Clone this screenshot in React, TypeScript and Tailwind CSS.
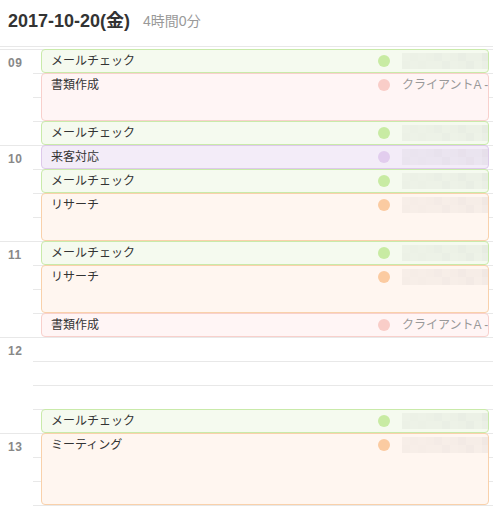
type Color = 'green' | 'pink' | 'purple' | 'orange';

interface CalEvent {
  title: string;
  start: number; // slot index from 09:00, 15 min each
  slots: number;
  color: Color;
  client?: string;
}

const SLOT = 24;

const palette: Record<Color, { box: string; dot: string }> = {
  green: { box: 'bg-[#f5faef] border-[#c9eaaa]', dot: 'bg-[#c8eba3]' },
  pink: { box: 'bg-[#fff5f5] border-[#f8d0cc]', dot: 'bg-[#f9cdc8]' },
  purple: { box: 'bg-[#f3ecf8] border-[#ddc9ea]', dot: 'bg-[#e2cdee]' },
  orange: { box: 'bg-[#fff6f0] border-[#f9d1ab]', dot: 'bg-[#fbcba1]' },
};

const events: CalEvent[] = [
  { title: 'メールチェック', start: 0, slots: 1, color: 'green' },
  { title: '書類作成', start: 1, slots: 2, color: 'pink', client: 'クライアントA -' },
  { title: 'メールチェック', start: 3, slots: 1, color: 'green' },
  { title: '来客対応', start: 4, slots: 1, color: 'purple' },
  { title: 'メールチェック', start: 5, slots: 1, color: 'green' },
  { title: 'リサーチ', start: 6, slots: 2, color: 'orange' },
  { title: 'メールチェック', start: 8, slots: 1, color: 'green' },
  { title: 'リサーチ', start: 9, slots: 2, color: 'orange' },
  { title: '書類作成', start: 11, slots: 1, color: 'pink', client: 'クライアントA -' },
  { title: 'メールチェック', start: 15, slots: 1, color: 'green' },
  { title: 'ミーティング', start: 16, slots: 3, color: 'orange' },
];

const hours = ['09', '10', '11', '12', '13'];

// pixelated mask over the hidden client name
const mosaic = [
  [0.05, 0.06, 0.05, 0.06, 0.07, 0.05, 0.06, 0.08, 0.06, 0.06, 0.09],
  [0.06, 0.05, 0.06, 0.05, 0.05, 0.07, 0.05, 0.06, 0.08, 0.05, 0.07],
];

function Mosaic() {
  return (
    <div className="flex flex-col">
      {mosaic.map((row, r) => (
        <div key={r} className="flex">
          {row.map((a, c) => (
            <div key={c} className="w-[8px] h-[8px] shrink-0" style={{ backgroundColor: `rgba(100,100,100,${a})` }} />
          ))}
        </div>
      ))}
    </div>
  );
}

function EventBox({ ev }: { ev: CalEvent }) {
  const p = palette[ev.color];
  return (
    <div
      className={`border rounded-[4px] overflow-hidden ${p.box}`}
      style={{ height: ev.slots * SLOT }}
    >
      <div className="flex items-center h-[22px]">
        <span className="flex-1 pl-[9px] text-[12px] text-[#333] whitespace-nowrap">{ev.title}</span>
        <div className="w-[110px] shrink-0 flex items-center overflow-hidden">
          <span className={`w-[12px] h-[12px] rounded-full shrink-0 ${p.dot}`} />
          <div className="ml-[12px] whitespace-nowrap text-[12px] text-[#999]">
            {ev.client ? ev.client : <Mosaic />}
          </div>
        </div>
      </div>
    </div>
  );
}

export default function App() {
  const items: { ev?: CalEvent; slots: number }[] = [];
  let cursor = 0;
  for (const ev of events) {
    if (ev.start > cursor) items.push({ slots: ev.start - cursor });
    items.push({ ev, slots: ev.slots });
    cursor = ev.start + ev.slots;
  }

  return (
    <div className="w-[493px] bg-white" style={{ fontFamily: '"Liberation Sans", "Noto Sans CJK JP", sans-serif' }}>
      <div className="h-[47px] flex items-center gap-[13px] pl-2 pb-[4px] border-b border-[#e8e8e8]">
        <span className="text-[18px] font-bold text-[#333]">2017-10-20(金)</span>
        <span className="text-[14px] text-[#999]">4時間0分</span>
      </div>

      <div className="grid pt-[2px]">
        {/* grid lines and hour labels */}
        <div className="col-start-1 row-start-1">
          {hours.map((h) => (
            <div key={h}>
              <div className="h-[24px] border-t border-[#e8e8e8] flex items-center pl-2 pt-[3px]">
                <span className="text-[12px] font-bold text-[#888] tracking-[0.5px]">{h}</span>
              </div>
              {[1, 2, 3].map((q) => (
                <div key={q} className="h-[24px] flex">
                  <div className="w-[33px] shrink-0" />
                  <div className="flex-1 border-t border-[#e8e8e8]" />
                </div>
              ))}
            </div>
          ))}
        </div>

        {/* events */}
        <div className="col-start-1 row-start-1 pl-[41px] pr-[4px] flex flex-col">
          {items.map((it, i) =>
            it.ev ? <EventBox key={i} ev={it.ev} /> : <div key={i} style={{ height: it.slots * SLOT }} />
          )}
        </div>
      </div>
    </div>
  );
}
